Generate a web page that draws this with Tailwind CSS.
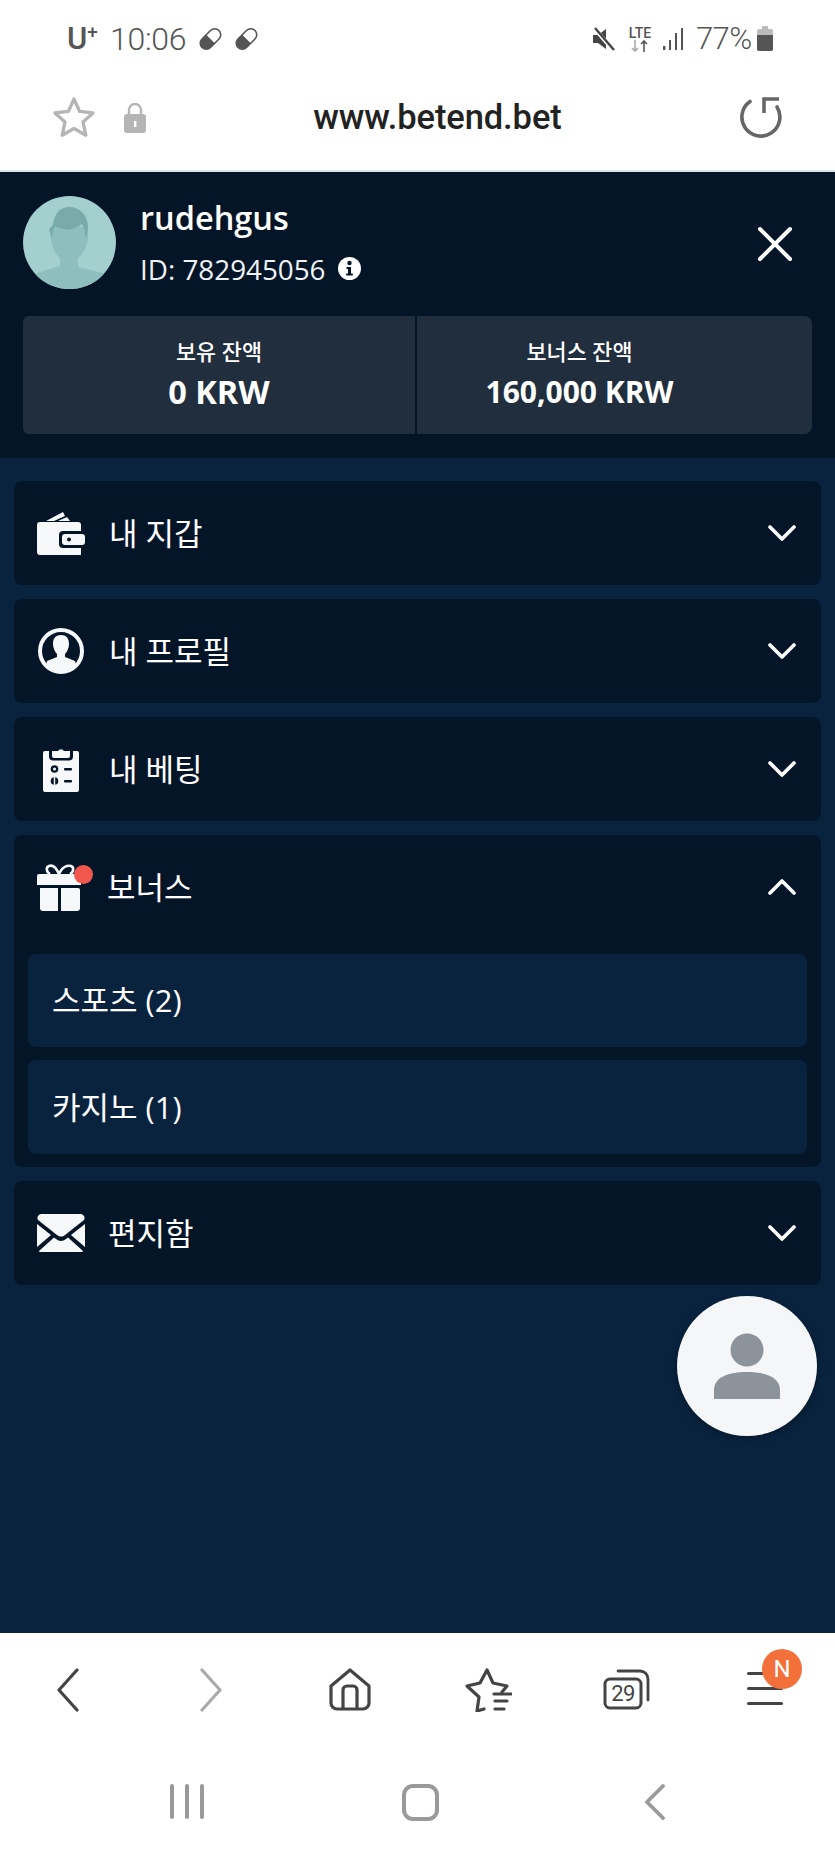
<!DOCTYPE html>
<html lang="ko">
<head>
    <meta charset="UTF-8">
    <meta name="viewport" content="width=device-width, initial-scale=1.0">
    <title>www.betend.bet</title>
    <script src="https://cdn.jsdelivr.net/npm/@tailwindcss/browser@4"></script>
</head>
<body class="bg-white font-['Open_Sans','Noto_Sans_CJK_KR',sans-serif]">
<div class="relative w-[835px] h-[1856px] flex flex-col overflow-hidden">

    <!-- Status bar -->
    <div class="h-[76px] flex items-center justify-between pl-[67px] pr-[62px] pt-[1px] font-['Roboto',sans-serif] text-[#555]">
        <div class="flex items-center">
            <span class="text-[31px] font-medium leading-none w-[43px] text-[#555]">U<sup class="text-[19px] -top-[11px]">+</sup></span>
            <span class="text-[32px] font-light leading-none w-[88px] tracking-[-0.3px]">10:06</span>
            <svg class="w-[25px] h-[24px]" viewBox="0 0 25 24"><g transform="rotate(-45 12.5 12)"><rect x="0.5" y="6" width="24" height="12" rx="6" fill="#fff" stroke="#555" stroke-width="1.6"/><path d="M12.5 6H6.5a6 6 0 0 0 0 12h6z" fill="#555"/></g></svg>
            <svg class="w-[25px] h-[24px] ml-[11px]" viewBox="0 0 25 24"><g transform="rotate(-45 12.5 12)"><rect x="0.5" y="6" width="24" height="12" rx="6" fill="#fff" stroke="#555" stroke-width="1.6"/><path d="M12.5 6H6.5a6 6 0 0 0 0 12h6z" fill="#555"/></g></svg>
        </div>
        <div class="flex items-center">
            <svg class="w-[25px] h-[24px]" viewBox="0 0 25 24"><path d="M2 8h5l8-6v20l-8-6H2z" fill="#444"/><path d="M4 2l18 21" stroke="#fff" stroke-width="4"/><path d="M4 1l19 22" stroke="#444" stroke-width="2.4"/></svg>
            <div class="w-[26px] ml-[11px] flex flex-col items-center leading-none text-[#555]">
                <span class="text-[14px] font-medium leading-[14px]">LTE</span>
                <svg class="w-[20px] h-[12px]" viewBox="0 0 20 12"><path d="M5 0v11M2 8l3 3 3-3" stroke="#aaa" stroke-width="1.6" fill="none"/><path d="M14 12V1M11 4l3-3 3 3" stroke="#555" stroke-width="1.6" fill="none"/></svg>
            </div>
            <svg class="w-[22px] h-[24px] ml-[10px]" viewBox="0 0 22 24"><g fill="#555"><rect x="0" y="19" width="2.4" height="4"/><rect x="6" y="13" width="2" height="10"/><rect x="12" y="6" width="2" height="17"/><rect x="18" y="1" width="2" height="22"/></g></svg>
            <span class="text-[31px] font-light leading-none w-[61px] ml-[11px] tracking-[-0.6px]">77%</span>
            <svg class="w-[16px] h-[25px]" viewBox="0 0 16 25"><path d="M5 0h6v3h3a2 2 0 0 1 2 2v18a2 2 0 0 1-2 2H2a2 2 0 0 1-2-2V5a2 2 0 0 1 2-2h3z" fill="#bbb"/><path d="M0 9h16v14a2 2 0 0 1-2 2H2a2 2 0 0 1-2-2z" fill="#555"/></svg>
        </div>
    </div>

    <!-- Address bar -->
    <div class="h-[96px] flex items-center pl-[52px] pr-[52px] pb-[11px] border-b-2 border-[#dfe5e5]">
        <svg class="w-[44px] h-[43px] shrink-0" viewBox="0 0 44 43"><path d="M22 3l5.600 12.400 13.400 1.500-10 9.100 2.800 13.200L22 32.600l-11.800 6.600L13 26 3 16.900l13.400-1.500z" fill="none" stroke="#b5b5b5" stroke-width="3.400" stroke-linejoin="round"/></svg>
        <svg class="w-[22px] h-[30px] ml-[28px] shrink-0" viewBox="0 0 22 30"><path d="M5 12V7a6 6 0 0 1 12 0v5" fill="none" stroke="#b5b5b5" stroke-width="2.400"/><rect x="0" y="11" width="22" height="19" rx="3" fill="#b5b5b5"/><rect x="10" y="18" width="2.400" height="6" fill="#fff"/></svg>
        <div class="flex-1 text-center font-['Roboto',sans-serif] font-medium text-[34.500px] text-[#222] leading-none pr-[10px] tracking-[-0.1px]">www.betend.bet</div>
        <svg class="w-[44px] h-[41px] shrink-0" viewBox="0 0 44 41"><path d="M11 4.500A19 19 0 1 0 38 10" fill="none" stroke="#666" stroke-width="3.600" stroke-linecap="round"/><path d="M25 16V2h15" stroke="#666" stroke-width="3.600" fill="none"/></svg>
    </div>

    <!-- Profile header -->
    <div class="h-[286px] bg-[#051528] px-[23px] pt-[24px] text-white">
        <div class="flex items-center h-[92px]">
            <svg class="w-[93px] h-[93px] shrink-0" viewBox="0 0 93 93">
                <clipPath id="avatarClip"><circle cx="46.500" cy="46.500" r="46.500"/></clipPath>
                <g clip-path="url(#avatarClip)">
                    <rect width="93" height="93" fill="#a4cfcf"/>
                    <path d="M28 40c0 10 4 18 9 22v8L14 77 8 93h76l-4-16-25-6v-9c5-4 10-12 10-22 0-16-37-16-37 0z" fill="#8fbebe"/>
                    <path d="M26 33l4-4c1-12 8-18 16-18 11 0 19 8 19 20 0 5-1 10-2 12-1-6-2-11-4-15-5 3-9 5-13 6-6-1-11-3-14-3-2 3-3 7-3 12-1-3-2-7-3-10z" fill="#79abaa"/>
                </g>
            </svg>
            <div class="ml-[24px] flex-1">
                <div class="text-[32.500px] font-semibold leading-[40px] mt-[-1px]">rudehgus</div>
                <div class="flex items-center mt-[14px]">
                    <span class="text-[27.800px] leading-[34px] text-[#f0f3f5]">ID: 782945056</span>
                    <svg class="w-[23px] h-[23px] ml-[12px]" viewBox="0 0 23 23"><circle cx="11.500" cy="11.500" r="11.500" fill="#fff"/><circle cx="11.500" cy="6" r="2.200" fill="#051528"/><path d="M8.500 10h4.500v6.500h1.800v2H8.200v-2H10V12H8.500z" fill="#051528"/></svg>
                </div>
            </div>
            <svg class="w-[36px] h-[36px] mr-[19px] mt-[3px]" viewBox="0 0 36 36"><path d="M3 3l30 30M33 3L3 33" stroke="#fff" stroke-width="4" stroke-linecap="round"/></svg>
        </div>
        <div class="flex mt-[28px] h-[118px] w-[789px] gap-[2px]">
            <div class="w-[392px] bg-[#202e3e] rounded-l-[6px] flex flex-col items-center pt-[21px]">
                <span class="text-[21.800px] font-medium leading-[30px]">보유 잔액</span>
                <span class="text-[32.500px] font-bold leading-[38px] mt-[6px]">0 KRW</span>
            </div>
            <div class="flex-1 bg-[#202e3e] rounded-r-[8px] flex flex-col items-center pt-[21px] pr-[70px]">
                <span class="text-[21.800px] font-medium leading-[30px]">보너스 잔액</span>
                <span class="text-[30px] font-bold leading-[38px] mt-[6px]">160,000 KRW</span>
            </div>
        </div>
    </div>

    <!-- Menu -->
    <div class="flex-1 bg-[#09233f] px-[14px] pt-[23px] flex flex-col gap-[14px] text-white">

        <div class="h-[104px] bg-[#051528] rounded-[8px] flex items-center pl-[23px] pr-[25px]">
            <svg class="w-[48px] h-[48px] shrink-0" viewBox="0 0 48 48">
                <path d="M9 12L26 3l2 4-11 5zM21 12l9-4 3 4z" fill="#f7f8f9"/>
                <path d="M3 13h38a3 3 0 0 1 3 3v30H3a3 3 0 0 1-3-3V16a3 3 0 0 1 3-3z" fill="#f7f8f9"/>
                <rect x="22" y="22" width="26" height="17" rx="4" fill="#051528"/>
                <rect x="25" y="25" width="23" height="11" rx="3" fill="#f7f8f9"/>
                <circle cx="32" cy="30.500" r="2" fill="#051528"/>
            </svg>
            <span class="ml-[24px] flex-1 text-[31px] leading-none">내 지갑</span>
            <svg class="w-[28px] h-[16px]" viewBox="0 0 28 16"><path d="M2 2l12 12L26 2" fill="none" stroke="#fff" stroke-width="3.600" stroke-linecap="round" stroke-linejoin="round"/></svg>
        </div>

        <div class="h-[104px] bg-[#051528] rounded-[8px] flex items-center pl-[23px] pr-[25px]">
            <svg class="w-[48px] h-[48px] shrink-0" viewBox="0 0 48 48">
                <clipPath id="profileClip"><circle cx="24" cy="24" r="21"/></clipPath>
                <circle cx="24" cy="24" r="21" fill="#051528" stroke="#f7f8f9" stroke-width="4"/>
                <g clip-path="url(#profileClip)" fill="#f7f8f9">
                    <path d="M16 17c0-6 3-9 8-9s8 3 8 9c0 4-2 8-4 10v3l10 4 4 14H6l4-14 10-4v-3c-2-2-4-6-4-10z"/>
                </g>
            </svg>
            <span class="ml-[24px] flex-1 text-[31px] leading-none">내 프로필</span>
            <svg class="w-[28px] h-[16px]" viewBox="0 0 28 16"><path d="M2 2l12 12L26 2" fill="none" stroke="#fff" stroke-width="3.600" stroke-linecap="round" stroke-linejoin="round"/></svg>
        </div>

        <div class="h-[104px] bg-[#051528] rounded-[8px] flex items-center pl-[23px] pr-[25px]">
            <svg class="w-[48px] h-[48px] shrink-0" viewBox="0 0 48 48">
                <rect x="6" y="6" width="36" height="41" rx="2" fill="#f7f8f9"/>
                <path d="M13 3h7a4 4 0 0 1 8 0h7v9a3 3 0 0 1-3 3H16a3 3 0 0 1-3-3z" fill="#051528" transform="translate(0 -0.500)" stroke="#051528" stroke-width="2"/>
                <path d="M15 6h6a3.500 3.500 0 0 1 6 0h6v5a2 2 0 0 1-2 2H17a2 2 0 0 1-2-2z" fill="#f7f8f9"/>
                <circle cx="17.500" cy="24" r="3.800" fill="#051528"/><circle cx="17.500" cy="24" r="1.500" fill="#f7f8f9"/>
                <rect x="27" y="23" width="8" height="2.400" rx="1" fill="#051528"/>
                <circle cx="17.500" cy="36" r="3.800" fill="#051528"/><rect x="16.800" y="32" width="1.400" height="8" fill="#f7f8f9"/>
                <rect x="27" y="35" width="8" height="2.400" rx="1" fill="#051528"/>
            </svg>
            <span class="ml-[24px] flex-1 text-[31px] leading-none">내 베팅</span>
            <svg class="w-[28px] h-[16px]" viewBox="0 0 28 16"><path d="M2 2l12 12L26 2" fill="none" stroke="#fff" stroke-width="3.600" stroke-linecap="round" stroke-linejoin="round"/></svg>
        </div>

        <div class="bg-[#051528] rounded-[8px] h-[332px] px-[14px]">
            <div class="h-[104px] flex items-center pl-[9px] pr-[11px]">
                <div class="relative w-[48px] h-[48px] shrink-0">
                    <svg class="w-[48px] h-[48px]" viewBox="0 0 48 48">
                        <path d="M22 11c-3-7-7-9-10-8-3 1-3 6 1 8M22 11c3-7 8-9 12-8 3 1 3 6-1 8" fill="none" stroke="#f7f8f9" stroke-width="2.600"/>
                        <path d="M2 11h40a2 2 0 0 1 2 2v9H0v-9a2 2 0 0 1 2-2z" fill="#f7f8f9"/>
                        <path d="M3 25h18v23H6a3 3 0 0 1-3-3zM24 25h17a2 2 0 0 1 2 2v18a3 3 0 0 1-3 3H24z" fill="#f7f8f9"/>
                    </svg>
                    <span class="absolute left-[37px] top-[2px] w-[19px] h-[19px] rounded-full bg-[#f0584e]"></span>
                </div>
                <span class="ml-[22px] flex-1 text-[31px] leading-none">보너스</span>
                <svg class="w-[28px] h-[16px]" viewBox="0 0 28 16"><path d="M2 14L14 2l12 12" fill="none" stroke="#fff" stroke-width="3.600" stroke-linecap="round" stroke-linejoin="round"/></svg>
            </div>
            <div class="flex flex-col gap-[13px] mt-[15px]">
                <div class="h-[93px] bg-[#09233f] rounded-[8px] flex items-center pl-[24px] text-[31px] leading-none">스포츠 (2)</div>
                <div class="h-[94px] bg-[#09233f] rounded-[8px] flex items-center pl-[24px] text-[31px] leading-none">카지노 (1)</div>
            </div>
        </div>

        <div class="h-[104px] bg-[#051528] rounded-[8px] flex items-center pl-[23px] pr-[25px]">
            <svg class="w-[48px] h-[38px] shrink-0" viewBox="0 0 48 38">
                <path d="M4 0h40a4 4 0 0 1 3 6L28 21c-2.500 2-5.500 2-8 0L1 6a4 4 0 0 1 3-6z" fill="#f7f8f9"/>
                <path d="M0 10l14 11L0 33zM48 10L34 21l14 12zM17 23.500l2 1.500c3 2.500 7 2.500 10 0l2-1.500L46 37a1 1 0 0 1-1 1H3a1 1 0 0 1-1-1z" fill="#f7f8f9"/>
            </svg>
            <span class="ml-[23px] flex-1 text-[31px] leading-none">편지함</span>
            <svg class="w-[28px] h-[16px]" viewBox="0 0 28 16"><path d="M2 2l12 12L26 2" fill="none" stroke="#fff" stroke-width="3.600" stroke-linecap="round" stroke-linejoin="round"/></svg>
        </div>
    </div>

    <!-- Floating account button -->
    <div class="absolute left-[677px] top-[1296px] w-[140px] h-[140px] rounded-full bg-[#f4f6f8] flex items-center justify-center shadow-[0_2px_10px_rgba(0,0,0,0.35)]">
        <svg class="w-[66px] h-[66px]" viewBox="0 0 66 66"><circle cx="33" cy="17" r="16.500" fill="#8c939b"/><path d="M0 66V57c0-13 15-18 33-18s33 5 33 18v9z" fill="#8c939b"/></svg>
    </div>

    <!-- Browser toolbar -->
    <div class="h-[130px] bg-white flex items-start pt-[35px]">
        <svg class="ml-[56px] w-[23px] h-[44px]" viewBox="0 0 23 44"><path d="M21 2L3 22l18 20" fill="none" stroke="#444" stroke-width="3.200" stroke-linecap="round" stroke-linejoin="round"/></svg>
        <svg class="ml-[121px] w-[23px] h-[44px]" viewBox="0 0 23 44"><path d="M2 2l18 20L2 42" fill="none" stroke="#aaa" stroke-width="3.200" stroke-linecap="round" stroke-linejoin="round"/></svg>
        <svg class="ml-[106px] w-[42px] h-[43px]" viewBox="0 0 42 43"><path d="M2 18L21 2l19 16v17a6 6 0 0 1-6 6H8a6 6 0 0 1-6-6z" fill="none" stroke="#444" stroke-width="3.200" stroke-linejoin="round"/><path d="M14 41V22a4 4 0 0 1 4-4h6a4 4 0 0 1 4 4v19" fill="none" stroke="#444" stroke-width="3.200"/></svg>
        <svg class="ml-[94px] w-[47px] h-[44px]" viewBox="0 0 47 44"><path d="M19 41l-7 2 2-14L2 18l13-3L22 2l6 13 14 3-5 6" fill="none" stroke="#444" stroke-width="3.200" stroke-linejoin="round" stroke-linecap="round"/><path d="M29 26h17M30 33h12M30 41h9" stroke="#444" stroke-width="3.200" stroke-linecap="round"/></svg>
        <div class="relative ml-[91px] w-[47px] h-[41px] mt-[1px]">
            <svg class="w-[47px] h-[41px]" viewBox="0 0 47 41"><path d="M15 2h22a8 8 0 0 1 8 8v21" fill="none" stroke="#444" stroke-width="2.800" stroke-linecap="round"/><rect x="2" y="10" width="36" height="29" rx="5" fill="none" stroke="#444" stroke-width="3"/></svg>
            <span class="absolute left-[2px] top-[10px] w-[36px] h-[29px] flex items-center justify-center font-['Roboto',sans-serif] text-[22px] text-[#444] leading-none tracking-[-0.5px]">29</span>
        </div>
        <div class="relative ml-[97px] w-[36px] h-[44px] flex flex-col gap-[12px] pt-[4px]">
            <span class="h-[3px] bg-[#444] rounded-full"></span>
            <span class="h-[3px] bg-[#444] rounded-full"></span>
            <span class="h-[3px] bg-[#444] rounded-full"></span>
            <span class="absolute left-[15px] top-[-19px] w-[40px] h-[40px] rounded-full bg-[#f4703a] text-white flex items-center justify-center font-['Roboto',sans-serif] text-[24px] leading-none">N</span>
        </div>
    </div>

    <!-- System navigation -->
    <div class="h-[93px] bg-white flex items-start pt-[21px]">
        <div class="ml-[170px] flex gap-[11px] h-[35px]">
            <span class="w-[4px] bg-[#999] rounded-full"></span>
            <span class="w-[4px] bg-[#999] rounded-full"></span>
            <span class="w-[4px] bg-[#999] rounded-full"></span>
        </div>
        <div class="ml-[198px] w-[37px] h-[37px] border-[4px] border-[#999] rounded-[11px]"></div>
        <svg class="ml-[204px] w-[22px] h-[36px]" viewBox="0 0 22 36"><path d="M20 2L4 18l16 16" fill="none" stroke="#999" stroke-width="3.800" stroke-linecap="round" stroke-linejoin="round"/></svg>
    </div>
</div>
</body>
</html>
